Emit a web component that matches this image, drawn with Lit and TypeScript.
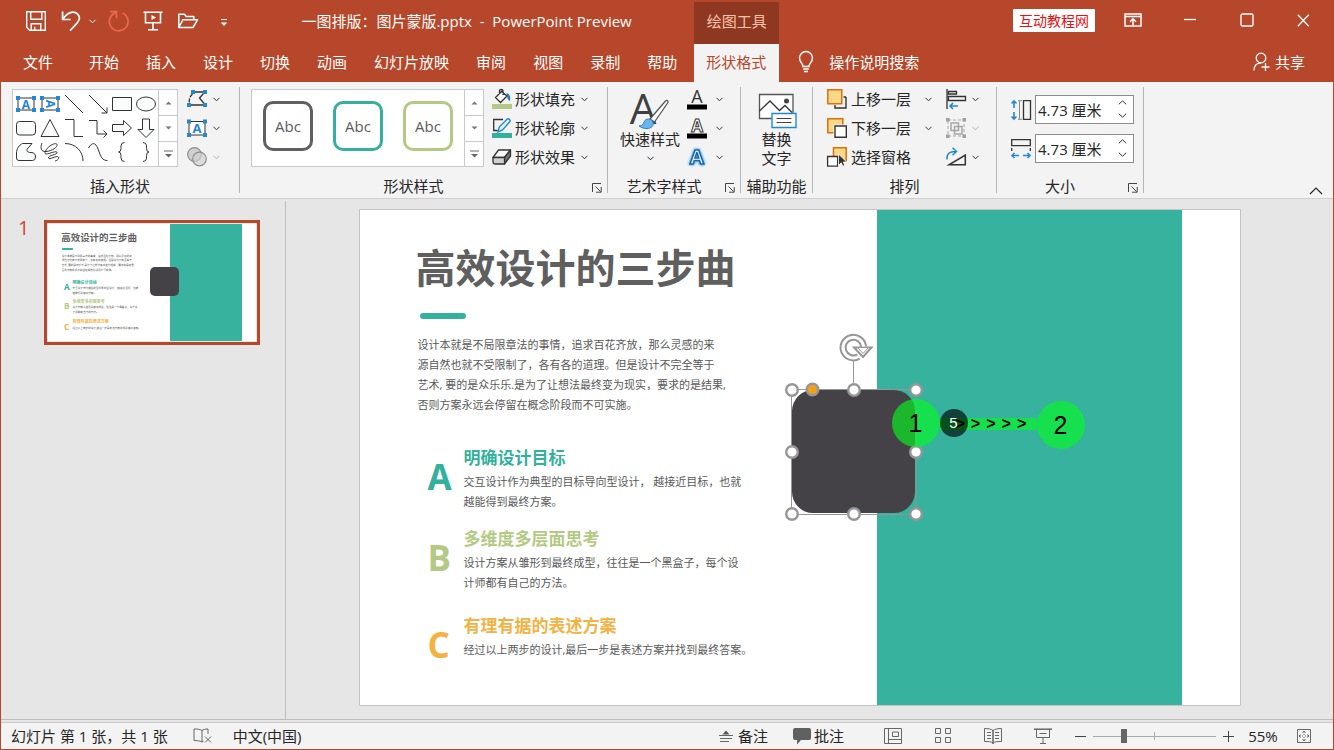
import { LitElement, html, css, svg } from "lit";
import { customElement, property } from "lit/decorators.js";

const icon = (w: number, h: number, body: unknown) =>
  html`<svg width=${w} height=${h} viewBox="0 0 ${w} ${h}" fill="none" stroke="currentColor" aria-hidden="true">${body}</svg>`;

const chevron = () => icon(7, 5, svg`<path d="M.5 .8 3.5 3.8 6.5 .8"/>`);

const corners = (x1: number, y1: number, x2: number, y2: number) => svg`
  <g fill="#2188d4" stroke="none">
    <rect x=${x1 - 2} y=${y1 - 2} width="4" height="4"/><rect x=${x2 - 2} y=${y1 - 2} width="4" height="4"/>
    <rect x=${x1 - 2} y=${y2 - 2} width="4" height="4"/><rect x=${x2 - 2} y=${y2 - 2} width="4" height="4"/>
  </g>`;

const letterA = (x: number, y: number, size: number, fill: string, weight = 700) => svg`
  <text x=${x} y=${y} font-size=${size} font-weight=${weight} font-family="Open Sans, sans-serif" text-anchor="middle" fill=${fill} stroke="none">A</text>`;

const glyphs = {
  save: icon(22, 22, svg`<g stroke-width="1.4"><path d="M1.7 1.7h18.6v18.6H4.7l-3-3z"/><path d="M5.7 1.7v7.6h11.1V1.7M6.2 20.3v-6.6h9.6v6.6M9.7 20.3v-3.6"/></g>`),
  undo: icon(20, 22, svg`<path stroke-width="1.7" d="M1.6 1.5v8h8M1.8 9.2C5.5 4 9 2.2 12 2.2c4 0 6.400 3 6.400 6 0 3.300-2.600 5-9.400 12.600"/>`),
  redo: icon(22, 22, svg`<path stroke-width="1.7" d="M3 1.700h6.500v6.500M9 2.600A9.300 9.300 0 1 0 15.500 3"/>`),
  present: icon(20, 22, svg`<g stroke-width="1.6"><path d="M.5 2.200h19M2.500 2.200v10.600h15V2.200M10 12.800v6.700M5 19.800h10"/><path d="M8.500 5 13 7.500 8.500 10z" fill="currentColor" stroke="none"/></g>`),
  open: icon(22, 20, svg`<path stroke-width="1.5" stroke-linejoin="round" d="M1.800 16.500V3.200h5.700l1.700 2.300h7.600v3.300M1.800 16.500l4-7.700h14.700l-4.500 7.700z"/>`),
  customize: icon(8, 9, svg`<path d="M1 1.500h6"/><path d="M.8 4.500h6.400L4 8z" fill="currentColor" stroke="none"/>`),
  bulb: icon(16, 22, svg`<path stroke-width="1.400" d="M5 15.500c0-3-3.500-4.500-3.500-8.500a6.500 6.500 0 0 1 13 0c0 4-3.500 5.500-3.500 8.500zM5.200 18h5.600M6 20.500h4"/>`),
  share: icon(18, 20, svg`<g stroke-width="1.300"><circle cx="8" cy="6" r="4.800"/><path d="M1 18.500c0-4.500 2.500-7.500 7-7.700M12.500 11v8M8.500 15h8"/></g>`),
  ribbonOptions: icon(18, 14, svg`<g stroke-width="1.500"><path d="M1 1h16v12H1zM1 3.500h16"/><path d="M9 12V6M6 8.700l3-3 3 3"/></g>`),
  minimize: icon(12, 12, svg`<path stroke-width="1.300" d="M0 5.500h12"/>`),
  maximize: icon(14, 14, svg`<rect x="1" y="1" width="12" height="12" rx="1.500" stroke-width="1.400"/>`),
  close: icon(13, 13, svg`<path stroke-width="1.300" d="M.8 .8l11 11.500M11.800 .8l-11 11.500"/>`),
  up: icon(7, 4, svg`<path d="M.5 3.500 3.500 .5l3 3z" fill="#777" stroke="none"/>`),
  down: icon(7, 4, svg`<path d="M.5 .5l3 3 3-3z" fill="#777" stroke="none"/>`),
  more: icon(9, 8, svg`<path d="M0 1h9" stroke="#666"/><path d="M1 4l3.500 3.500L8 4z" fill="#666" stroke="none"/>`),
  launcher: icon(10, 10, svg`<path d="M9 .5H.5V9M3.500 3.500l5 5M9.200 4v5.200H4"/>`),
  collapse: icon(14, 8, svg`<path stroke-width="1.200" d="M1 7l6-6 6 6"/>`),
  spinUp: icon(9, 5, svg`<path d="M.8 4.300 4.500 .800l3.700 3.500"/>`),
  spinDown: icon(9, 5, svg`<path d="M.8 .700l3.700 3.500L8.200 .700"/>`),

  editShape: icon(20, 20, svg`<path stroke-width="1.300" d="M8 3h8M16.500 4.500 12.500 9l5 6M4 16h12"/><path stroke-width="1.300" d="M5.500 5C2.500 8 2.200 10 2.200 14" stroke-dasharray="4 1.500"/><g fill="#2188d4" stroke="none"><rect x="4" y="1" width="4" height="4"/><rect x="16" y="1" width="4" height="4"/><rect x="0" y="14" width="4" height="4"/><rect x="16" y="14" width="4" height="4"/></g>`),
  textBox: icon(20, 20, svg`<rect x="2" y="3.500" width="16" height="13.500" fill="#fff"/>${corners(2, 3.5, 18, 17)}${letterA(10, 15, 13, "#2188d4")}`),
  merge: icon(20, 20, svg`<g fill="#d0d0d0" stroke="#8d8d8d" stroke-width="1.200"><circle cx="7.500" cy="7.500" r="6.800"/><circle cx="12.500" cy="12" r="6.800" fill-opacity=".7"/></g>`),
  fill: icon(20, 20, svg`<path stroke-width="1.300" fill="#fff" d="M9.500 2.500 3.500 8.500l5 5 6.500-6.500zM7.500 5V2c0-2 3.500-2 3.500 0v4"/><path d="M14.500 4c3.500 1 4 4 3.500 8-2.500-1-3-4-3.500-8z" fill="#1d79c5" stroke="none"/><path d="M0 15h20v5H0z" fill="#b4ca84" stroke="none"/>`),
  outline: icon(20, 20, svg`<path stroke-width="1.300" d="M11 1.500H1.700v11h4"/><path d="M6 14l1.300-5L15 1.300c1.500-1.400 4 .8 2.700 2.500L10.500 12z" fill="#e8f4fd" stroke="#2188d4" stroke-width="1.400"/><path d="M0 15h20v5H0z" fill="#34b19d" stroke="none"/>`),
  effects: icon(20, 18, svg`<g stroke-width="1.300" stroke-linejoin="round"><path d="M1 9.500 6.500 2H18.500l-6 7.500z" fill="#fff"/><path d="M12.500 9.500 18.500 2v6L12.500 16z" fill="#777"/><path d="M1 9.500h11.500V16H3.500q-2.500 0-2.500-2z" fill="#d0d0d0"/></g>`),
  quick: icon(40, 38, svg`${letterA(13, 32, 42, "#3f3f3f", 400)}<path d="M20 27 35.500 9c1.500-1.400 3.200 0 2.300 1.800L24.500 30z" fill="#fff" stroke="#505050" stroke-width="1.200"/><path d="M9 34c3 0 4-1 5-4 1.500-4 7.500-4 9 0 1.200 4-2 6.500-6 6.500-3 0-5-.5-8-2.500z" fill="#6cb5ec" stroke="#2783cd"/>`),
  textFill: icon(20, 21, svg`${letterA(10, 14, 18, "#333", 400)}<path d="M0 15.500h20v5H0z" fill="#000" stroke="none"/>`),
  textOutline: icon(20, 21, svg`<text x="10" y="14" font-size="17" font-weight="700" font-family="Open Sans, sans-serif" text-anchor="middle" fill="#fff" stroke="#333">A</text><path d="M0 15.500h20v5H0z" fill="#000" stroke="none"/>`),
  textEffects: icon(20, 20, svg`<text x="10" y="17" font-size="20" font-weight="700" font-family="Open Sans, sans-serif" text-anchor="middle" fill="#fff" stroke="#1466b0" stroke-width="1.600" style="filter: drop-shadow(0 0 1px #6cb5ec) drop-shadow(0 0 1px #6cb5ec)">A</text>`),
  altText: icon(40, 38, svg`<path d="M2.500 2.500H36v24H2.500z" fill="#fff" stroke="#555" stroke-width="1.300"/><path stroke="#333" stroke-width="1.300" d="M2.500 19 13 9l9.500 9.500L28 13.500l7 7"/><circle cx="29.500" cy="9" r="2.500" fill="#444" stroke="none"/><path d="M15 21.500h24v14H15z" fill="#fff" stroke="#2188d4" stroke-width="1.400"/><path stroke="#444" d="M19.500 26.500h15M19.500 30.500h15"/>`),
  forward: icon(20, 20, svg`<path d="M19 8v11H8v-3M19 8h-2.500" stroke-width="1.400"/><path d="M.8 .8h14v14H.8z" fill="#f8d98a" stroke="#dd6f0c" stroke-width="1.500"/>`),
  backward: icon(20, 20, svg`<path d="M.8 .8h15v14H.8z" fill="#f8d98a" stroke="#dd6f0c" stroke-width="1.500"/><path d="M6.500 6.500H20V20H6.500z" fill="#f3f3f3" stroke="none"/><path d="M8 8h11.300v11.300H8z" fill="#fff" stroke-width="1.400"/>`),
  pane: icon(20, 20, svg`<path d="M6.500 .8h12.700v13H6.500z" fill="#f8d98a" stroke="#dd6f0c" stroke-width="1.500"/><path d="M.6 9.500h10v9.700H.6z" fill="#fff" stroke-width="1.300"/><path d="M11.500 7v11.500l2.700-2.700 1.600 3.400 2-1-1.600-3.200h3.500z" fill="#333" stroke="#fff" stroke-width=".8"/>`),
  align: icon(20, 20, svg`<path stroke-width="1.300" d="M1 0v20M2.500 2.500h8V5h-8zM2.500 7.500h17v4h-17z"/><path stroke="#2188d4" stroke-width="1.600" d="M12 17H4M7 14l-3 3 3 3"/>`),
  group: icon(20, 20, svg`<g stroke="#a6a6a6"><path d="M2 2h16v16H2z" stroke-dasharray="3 2"/><path d="M5 5h7.500v7.500H5zM8.500 8.500H16V16H8.500z" stroke-width="1.500"/></g><g fill="#a0a0a0" stroke="none"><rect width="3.500" height="3.500"/><rect x="16.500" width="3.500" height="3.500"/><rect y="16.500" width="3.500" height="3.500"/><rect x="16.500" y="16.500" width="3.500" height="3.500"/></g>`),
  rotate: icon(20, 20, svg`<path stroke-width="1.500" d="M19.300 8v9.800H3z"/><path stroke="#2188d4" stroke-width="1.500" d="M1 12.500C.5 7 3 4.500 10 4.500M6.500 .800l4 3.700-4 3.700"/>`),
  height: icon(20, 20, svg`<path d="M12.500 .700h7v18.600h-7z" stroke-width="1.300"/><path d="M7 .700h4M7 19.300h4M8.500 1v18" stroke-width="1" stroke="#888"/><path stroke="#2188d4" stroke-width="1.600" d="M3 1v7M.500 3.500 3 1l2.500 2.500M3 19v-7M.500 16.500 3 19l2.500-2.500"/>`),
  width: icon(20, 20, svg`<path d="M.7 .700h18.600v6H.7z" stroke-width="1.300"/><path d="M.7 9v3M19.300 9v3" stroke-width="1.300"/><path stroke="#2188d4" stroke-width="1.600" d="M1 16.500h7M3.500 14 1 16.500 3.500 19M19 16.500h-7M16.500 14l2.500 2.500-2.500 2.500"/>`),

  spell: icon(20, 16, svg`<path d="M9 2.500C7 1.200 4 1 1 1v11.500c3 0 6 .3 8 1.500V2.500c1.500-1 3-1.500 6-1.500v5M9 14l1.500-.8M12 8.500l6 6M18 8.500l-6 6"/>`),
  notes: icon(14, 14, svg`<path d="M3.500 5.500 7 1.500l3.500 4z" fill="#555" stroke="none"/><path d="M0 6.500h14M1 9.500h12M1 12.500h9"/>`),
  comment: icon(18, 18, svg`<path d="M2 1h14q2 0 2 2v8q0 2-2 2H8l-4 4.500V13H2q-2 0-2-2V3q0-2 2-2z" fill="#606060" stroke="none"/>`),
  normal: icon(18, 16, svg`<path d="M.5 .5h17v15H.5zM4.500 .5v15M4.500 11.500h13M8.500 4h6v4.500h-6z"/>`),
  sorter: icon(18, 16, svg`<path d="M1.500 .5h5v5h-5zM11.500 .5h5v5h-5zM1.500 9.500h5v5h-5zM11.500 9.500h5v5h-5z"/>`),
  reading: icon(18, 16, svg`<path d="M9 2.500C7 1 4 .5 .5 .5v13c3.500 0 6.500 0 8.500 1.500 2-1.500 5-1.500 8.500-1.500V.5C14 .5 11 1 9 2.500"/><path stroke-width="1.500" d="M9 2v14"/><path d="M3 4.500h4M3 7.500h4M3 10.500h4M11 4.500h4M11 7.500h4M11 10.500h4"/>`),
  show: icon(18, 16, svg`<path stroke-width="1.500" d="M0 1.200h18"/><path d="M2.500 1.500v8h13v-8M5.500 5.500h7M9 9.500V15M6 15.500h6"/>`),
  fit: icon(14, 14, svg`<path d="M.5 .5h13v13H.5z"/><path stroke-dasharray="2 1" d="M7 2v4M7 12V8M2 7h4M12 7H8"/><path d="M5.500 3.500 7 2l1.500 1.500M5.500 10.500 7 12l1.500-1.500M3.500 5.500 2 7l1.500 1.500M10.500 5.500 12 7l-1.500 1.500"/>`),
};

const shapes: [string, unknown][] = [
  ["文本框", svg`<path d="M4 6h16v12H4z" fill="#fff"/>${corners(4, 6, 20, 18)}${letterA(12, 16.5, 12, "#2188d4")}`],
  ["竖排文本框", svg`<path d="M4 6h16v12H4z" fill="#fff"/>${corners(4, 6, 20, 18)}<g transform="rotate(90 12 12)">${letterA(12, 16.5, 12, "#2188d4")}</g>`],
  ["直线", svg`<path d="M3 3l18 18"/>`],
  ["箭头", svg`<path d="M3 3l18 18M21 15.500V21h-5.500"/>`],
  ["矩形", svg`<path d="M2.500 5.500h19v13h-19z" fill="#fafcfb"/>`],
  ["椭圆", svg`<ellipse cx="12" cy="12" rx="9.500" ry="7" fill="#fafcfb"/>`],
  ["圆角矩形", svg`<rect x="2.500" y="5.500" width="19" height="13.500" rx="3" fill="#fafcfb"/>`],
  ["三角形", svg`<path d="M12 3.500 21 20.500H3z" fill="#fafcfb"/>`],
  ["肘形连接符", svg`<path d="M3 3.500h9v17h9"/>`],
  ["肘形箭头", svg`<path d="M3 4.500h8v13.500h10M17.500 14.500 21 18l-3.500 3.500"/>`],
  ["右箭头", svg`<path d="M2.500 8.500h11v-4L21.500 12l-8 7.500v-4h-11z" fill="#fafcfb"/>`],
  ["下箭头", svg`<path d="M8.500 3h7v10.500h4.500L12 21.500 4 13.500h4.500z" fill="#fafcfb"/>`],
  ["任意多边形", svg`<path d="M5 20.500h13.500q3 0 3-3.500 0-4.500-4.500-4.500c-5 0-5-3-2-5.500l3-3.500H8.500C5 5 2.500 9 2.500 13v5q0 2.500 2.500 2.500z" fill="#fafcfb"/>`],
  ["自由曲线", svg`<path d="M4 3C2 8 3 12 8 11.500c6-.5 12-4.500 11-7C18 1.500 8 7 7 12.500c-.5 4.500 11-3 12 0 .5 2.500-9 2.500-8.500 5.500.5 2.500 8-3 10-1 1 1.500-1 3.500-3.500 4"/>`],
  ["弧形", svg`<path d="M3 3.500c11 0 18 8 18 17.500"/>`],
  ["曲线", svg`<path d="M2.500 8C6 2 9.500 2 12 9c3 8 4 11.500 9.500 11.500"/>`],
  ["左大括号", svg`<path d="M14.500 2.500q-3.500 0-3.500 3.500v2.500Q11 12 8.500 12q2.500 0 2.500 3.500V18q0 3.500 3.500 3.500"/>`],
  ["右大括号", svg`<path d="M9 2.500q3.500 0 3.500 3.500v2.500q0 3.500 2.500 3.500-2.500 0-2.500 3.500V18q0 3.500-3.500 3.500"/>`],
];

const points = [
  { letter: "A", tone: "teal", title: "明确设计目标", lines: ["交互设计作为典型的目标导向型设计， 越接近目标，也就", "越能得到最终方案。"] },
  { letter: "B", tone: "green", title: "多维度多层面思考", lines: ["设计方案从雏形到最终成型，往往是一个黑盒子，每个设", "计师都有自己的方法。"] },
  { letter: "C", tone: "amber", title: "有理有据的表述方案", lines: ["经过以上两步的设计,最后一步是表述方案并找到最终答案。"] },
];

const intro = [
  "设计本就是不局限章法的事情，追求百花齐放，那么灵感的来",
  "源自然也就不受限制了，各有各的道理。但是设计不完全等于",
  "艺术, 要的是众乐乐.是为了让想法最终变为现实，要求的是结果,",
  "否则方案永远会停留在概念阶段而不可实施。",
];

@customElement("slide-page")
class SlidePage extends LitElement {
  @property({ type: Boolean }) selected = false;

  static styles = css`
    :host { display: block; position: relative; width: 880px; height: 495px; background: #fff; color: #595959; font-family: "Open Sans", "Noto Sans CJK SC", sans-serif; }
    .layout { display: grid; grid-template-columns: 517fr 305fr 58fr; height: 100%; }
    .copy { padding: 33px 0 0 56px; white-space: nowrap; }
    .band { background: #36b29e; }
    h1 { margin: 0; font-size: 40px; line-height: 50px; color: #5f5f5f; }
    .rule { width: 46px; height: 6px; margin: 20px 4px 0; border-radius: 3px; background: #34b19d; }
    p { margin: 0; font-size: 11px; line-height: 20px; }
    .intro { margin: 16px 0 0 2px; }
    .points { display: grid; grid-template-rows: 81px 87px auto; margin: 30px 0 0 10px; }
    .point { display: grid; grid-template-columns: 38px auto; align-items: start; }
    .letter { font-size: 35px; line-height: 36px; font-weight: 700; padding-top: 14px; margin-left: 2px; }
    h2 { margin: 0 0 1px; font-size: 17px; line-height: 26px; }
    .teal { color: #34b19d; }
    .green { color: #b4ca84; }
    .amber { color: #f4b243; }
    .shape { position: absolute; left: 432px; top: 180px; width: 123px; height: 123px; border-radius: 21px; background: #444246; }
    .frame { position: absolute; left: 420px; top: 116px; }
    .dot { position: absolute; display: grid; place-items: center; border-radius: 50%; font-family: "Liberation Sans", sans-serif; }
    .step { width: 48px; height: 48px; background: rgba(4, 250, 32, .64); color: #000; font-size: 25px; line-height: 28px; }
    .first { left: 532px; top: 189px; }
    .second { left: 677px; top: 191px; }
    .trail { position: absolute; left: 580px; top: 208px; width: 97px; height: 12px; padding-left: 16px; box-sizing: border-box; display: flex; gap: 6px; align-items: center; background: rgba(4, 250, 32, .64); color: #000; font: 700 16px/12px "Liberation Sans", sans-serif; }
    .timer { left: 580px; top: 199px; width: 28px; height: 28px; background: rgba(0, 0, 0, .64); color: #fff; font-size: 15px; line-height: 18px; }
  `;

  private handle = (x: number, y: number) =>
    svg`<circle cx=${x} cy=${y} r="5.800" fill="#fff" stroke="#969696" stroke-width="2.400"/>`;

  private overlay() {
    return html`
      <svg class="frame" width="150" height="200" viewBox="0 0 150 200" fill="none" stroke="#969696" aria-hidden="true">
        <path d="M11.500 63.500h124.500v125H11.500zM73.500 63.500V34"/>
        <path d="M74 21.500 91.500 21.500 83 31z" fill="#fff" stroke-width="2"/>
        <path d="M83.600 20.500A10.300 10.300 0 1 0 78.500 30.500" stroke-width="7"/>
        <path d="M83.600 20.500A10.300 10.300 0 1 0 78.500 30.500" stroke="#fff" stroke-width="3"/>
        <path d="M77 22h12l-6 6z" fill="#fff" stroke="none"/>
        <path d="M73.500 21.500h4l5.500 6 5.500-6h3"/>
        ${[12, 74, 136].map((x) => [64, 126, 188].map((y) => (x === 74 && y === 126 ? "" : this.handle(x, y))))}
        <circle cx="32.500" cy="63.500" r="5.800" fill="#f0a01e" stroke-width="2.400"/>
      </svg>
      <span class="dot step first">1</span>
      <span class="trail">${[0, 1, 2, 3, 4].map(() => html`<span>&gt;</span>`)}</span>
      <span class="dot step second">2</span>
      <span class="dot timer">5</span>`;
  }

  render() {
    return html`
      <div class="layout">
        <div class="copy">
          <h1>高效设计的三步曲</h1>
          <div class="rule"></div>
          <div class="intro">${intro.map((l) => html`<p>${l}</p>`)}</div>
          <div class="points">
            ${points.map((p) => html`
              <div class="point">
                <span class="letter ${p.tone}">${p.letter}</span>
                <div><h2 class=${p.tone}>${p.title}</h2>${p.lines.map((l) => html`<p>${l}</p>`)}</div>
              </div>`)}
          </div>
        </div>
        <div class="band"></div>
      </div>
      <div class="shape"></div>
      ${this.selected ? this.overlay() : ""}`;
  }
}

@customElement("app-root")
class AppRoot extends LitElement {
  static styles = css`
    :host { display: flex; flex-direction: column; height: 100vh; box-sizing: border-box; border: solid #b7472a; border-width: 0 1px 1px; background: #e6e6e6; color: #262626; font: 15px/20px "Open Sans", "Noto Sans CJK SC", sans-serif; white-space: nowrap; overflow: hidden; }
    * { box-sizing: border-box; }
    svg { display: block; flex: none; overflow: visible; }
    button { display: flex; align-items: center; justify-content: center; margin: 0; padding: 0; border: 0; background: none; color: inherit; font: inherit; white-space: nowrap; }
    a { color: inherit; text-decoration: none; }

    header { display: grid; grid-template-columns: auto auto 1fr; grid-template-rows: 44px 38px; background: #b7472a; color: #fff; }
    .quick { display: flex; align-items: center; padding-bottom: 2px; }
    .qat { display: flex; align-items: center; padding-left: 24px; }
    .qat .undo { margin-left: 14px; }
    .qat .arrow { margin-left: 8px; }
    .qat .redo { margin-left: 11px; color: #e8694b; }
    .qat .present { margin-left: 14px; }
    .qat .open { margin-left: 14px; }
    .qat .custom { margin: 3px 11px 0 21px; }
    .title { flex: 1; text-align: center; white-space: pre; }
    .context { display: grid; place-items: center; margin-top: 2px; padding-bottom: 4px; background: #8f3821; color: #fbc3ae; }
    .window { display: flex; align-items: center; justify-content: flex-end; padding: 0 1px 4px 0; }
    .window button { width: 57px; height: 40px; }
    .badge { margin-right: 9px; padding: 0 6px; border-radius: 1px; background: #fff; color: #e81010; font-size: 14px; line-height: 23px; }
    .tabs { display: flex; align-items: center; gap: 27px; padding: 0 17px 2px 22px; }
    .tabs .file { margin-right: 9px; }
    .active { display: grid; place-items: center; padding: 0 13px 2px 12px; background: #f3f3f3; color: #b7472a; }
    .tools { display: flex; align-items: center; justify-content: space-between; padding: 0 28px 2px 19px; }
    .tell { gap: 15px; }
    .share { gap: 4px; }

    .ribbon { display: flex; padding: 5px 0; background: #f3f3f3; border-bottom: 1px solid #cfcfcf; }
    .group { display: grid; grid-template-rows: 93px 13px; border-right: 1px solid #b5b5b5; }
    .body { display: flex; }
    .label { display: flex; align-items: center; line-height: 13px; }
    .label span { flex: 1; text-align: center; }
    .label button { width: 20px; height: 13px; color: #444; padding-top: 3px; }
    .insert .body { padding: 0 19px 0 11px; gap: 9px; }
    .styles .body { padding: 0 19px 0 11px; gap: 8px; }
    .wordart .body { padding: 0 17px 0 12px; gap: 7px; }
    .access .body { justify-content: center; padding: 0 5px; }
    .arrange .body { padding: 0 17px 0 14px; gap: 14px; }
    .size .body { padding: 0 9px 0 14px; }
    .access .label { width: 71px; }
    .gallery { display: flex; align-self: start; height: 78px; margin-top: 2px; border: 1px solid #c9c9c9; background: #fff; }
    .shapes { display: grid; grid-template: repeat(3, 24px) / repeat(6, 24px); padding: 2px 0 0 1px; color: #333; }
    .cards { display: flex; align-items: center; gap: 20px; padding: 0 11px 5px; }
    .card { width: 50px; height: 50px; border: 3px solid; border-radius: 10px; }
    .card span { color: #5c5c5c; font-size: 15px; }
    .card.dark { border-color: #606060; }
    .card.teal { border-color: #34b19d; }
    .card.green { border-color: #b4ca84; }
    .scroll { display: grid; grid-template-rows: 1fr 1fr 1fr; width: 19px; border-left: 1px solid #c9c9c9; }
    .scroll button + button { border-top: 1px solid #c9c9c9; }
    .stack { display: flex; flex-direction: column; gap: 5px; color: #333; }
    .stack button { height: 24px; gap: 6px; justify-content: flex-start; }
    .stack .caption { color: #262626; margin-left: -3px; }
    .stack.wide button { gap: 9px; }
    .stack button.off { color: #b0b0b0; }
    .stack.spread .arrow { margin-left: auto; }
    .stack.spread { width: 105px; }
    .arrange .caption { margin-left: -2px; }
    .big { flex-direction: column; align-self: start; padding-top: 5px; line-height: 19px; }
    .big .arrow { margin-top: 7px; }
    .fields { display: grid; gap: 10px; padding-top: 8px; align-content: start; }
    .field { display: flex; align-items: center; gap: 4px; color: #333; }
    .spin { display: flex; width: 99px; height: 29px; border: 1px solid #8c8c8c; background: #fff; }
    .spin input { flex: 1; min-width: 0; padding: 0 0 0 2px; border: 0; background: none; color: #262626; font: inherit; outline: 0; }
    .spin .steps { display: grid; width: 21px; padding-bottom: 1px; }
    .collapse { margin: auto 10px -2px auto; }

    main { flex: 1; min-height: 0; display: grid; grid-template-columns: 285px 1fr; border-bottom: 1px solid #bdbdbd; }
    aside { display: flex; align-items: start; gap: 15px; margin-top: 2px; padding: 19px 0 0 17px; border-right: 1px solid #bdbdbd; }
    .number { width: 11px; color: #d0492c; font-size: 20px; line-height: 16px; }
    .thumb { border: 3px solid #b7472a; padding: 1px; background: #e6e6e6; }
    .thumb slide-page { zoom: .2365; }
    .stage { display: flex; justify-content: center; align-items: start; padding: 10px 20px 0 0; overflow: hidden; }
    .sheet { border: 1px solid #c4c4c4; }

    footer { display: flex; align-items: center; height: 27px; border-top: 1px solid #c9c9c9; margin-top: 2px; padding: 0 22px 0 10px; background: #f3f3f3; color: #666; }
    footer .text { color: #262626; }
    .lang { margin: 0 auto 0 20px; }
    .spell { margin-left: 25px; }
    .notes { gap: 5px; }
    .comments { margin: 0 40px 0 25px; gap: 3px; }
    .views { display: flex; gap: 32px; margin-right: 23px; }
    .zoom { display: flex; align-items: center; gap: 7px; }
    .range { appearance: none; width: 123px; height: 16px; margin: 0; background: linear-gradient(#aaa, #aaa) 50% 50% / 1px 8px no-repeat, linear-gradient(#aaa, #aaa) 50% 50% / 100% 1px no-repeat; }
    .range::-webkit-slider-thumb { appearance: none; width: 6px; height: 14px; background: #666; border: 0; }
    .percent { margin: 0 18px 0 13px; width: 32px; }
  `;

  private tool(name: string, glyph: unknown, caption = "", off = false, arrow = true) {
    return html`<button class=${off ? "off" : ""} aria-label=${name}>${glyph}${caption ? html`<span class="caption">${caption}</span>` : ""}${arrow ? html`<span class="arrow">${chevron()}</span>` : ""}</button>`;
  }

  private scroller() {
    return html`<div class="scroll">
      <button aria-label="上一行">${glyphs.up}</button><button aria-label="下一行">${glyphs.down}</button><button aria-label="其他">${glyphs.more}</button>
    </div>`;
  }

  private launcher(name: string) {
    return html`<button aria-label=${name}>${glyphs.launcher}</button>`;
  }

  private spin(id: string, name: string, glyph: unknown) {
    return html`<div class="field">
      <label for=${id} aria-label=${name}>${glyph}</label>
      <div class="spin">
        <input id=${id} type="text" aria-label=${name} .value=${"4.73 厘米"}>
        <div class="steps"><button aria-label="增加">${glyphs.spinUp}</button><button aria-label="减少">${glyphs.spinDown}</button></div>
      </div>
    </div>`;
  }

  render() {
    return html`
      <header>
        <div class="quick">
          <div class="qat">
            <button aria-label="保存">${glyphs.save}</button>
            <button class="undo" aria-label="撤消">${glyphs.undo}</button>
            <button class="arrow" aria-label="撤消列表">${chevron()}</button>
            <button class="redo" aria-label="重复">${glyphs.redo}</button>
            <button class="present" aria-label="从头开始放映">${glyphs.present}</button>
            <button class="open" aria-label="打开">${glyphs.open}</button>
            <button class="custom" aria-label="自定义快速访问工具栏">${glyphs.customize}</button>
          </div>
          <div class="title">一图排版：图片蒙版.pptx  -  PowerPoint Preview</div>
        </div>
        <div class="context">绘图工具</div>
        <div class="window">
          <span class="badge">互动教程网</span>
          <button aria-label="功能区显示选项">${glyphs.ribbonOptions}</button>
          <button aria-label="最小化">${glyphs.minimize}</button>
          <button aria-label="最大化">${glyphs.maximize}</button>
          <button aria-label="关闭">${glyphs.close}</button>
        </div>
        <nav class="tabs">
          <a class="file" href="#file">文件</a>
          ${["开始", "插入", "设计", "切换", "动画", "幻灯片放映", "审阅", "视图", "录制", "帮助"].map((t) => html`<a href="#${t}">${t}</a>`)}
        </nav>
        <a class="active" href="#format">形状格式</a>
        <div class="tools">
          <button class="tell">${glyphs.bulb}<span>操作说明搜索</span></button>
          <button class="share">${glyphs.share}<span>共享</span></button>
        </div>
      </header>

      <section class="ribbon">
        <div class="group insert">
          <div class="body">
            <div class="gallery">
              <div class="shapes">${shapes.map(([n, g]) => html`<button aria-label=${n}>${icon(24, 24, g)}</button>`)}</div>
              ${this.scroller()}
            </div>
            <div class="stack">
              ${this.tool("编辑形状", glyphs.editShape)}
              ${this.tool("文本框", glyphs.textBox)}
              ${this.tool("合并形状", glyphs.merge, "", true)}
            </div>
          </div>
          <div class="label"><span>插入形状</span></div>
        </div>

        <div class="group styles">
          <div class="body">
            <div class="gallery">
              <div class="cards">${["dark", "teal", "green"].map((c) => html`<button class="card ${c}"><span>Abc</span></button>`)}</div>
              ${this.scroller()}
            </div>
            <div class="stack">
              ${this.tool("形状填充", glyphs.fill, "形状填充")}
              ${this.tool("形状轮廓", glyphs.outline, "形状轮廓")}
              ${this.tool("形状效果", glyphs.effects, "形状效果")}
            </div>
          </div>
          <div class="label"><span>形状样式</span>${this.launcher("设置形状格式")}</div>
        </div>

        <div class="group wordart">
          <div class="body">
            <button class="big">${glyphs.quick}<span>快速样式</span><span class="arrow">${chevron()}</span></button>
            <div class="stack wide">
              ${this.tool("文本填充", glyphs.textFill)}
              ${this.tool("文本轮廓", glyphs.textOutline)}
              ${this.tool("文本效果", glyphs.textEffects)}
            </div>
          </div>
          <div class="label"><span>艺术字样式</span>${this.launcher("设置文本效果格式")}</div>
        </div>

        <div class="group access">
          <div class="body"><button class="big">${glyphs.altText}<span>替换<br>文字</span></button></div>
          <div class="label"><span>辅助功能</span></div>
        </div>

        <div class="group arrange">
          <div class="body">
            <div class="stack spread">
              ${this.tool("上移一层", glyphs.forward, "上移一层")}
              ${this.tool("下移一层", glyphs.backward, "下移一层")}
              ${this.tool("选择窗格", glyphs.pane, "选择窗格", false, false)}
            </div>
            <div class="stack">
              ${this.tool("对齐", glyphs.align)}
              ${this.tool("组合", glyphs.group, "", true)}
              ${this.tool("旋转", glyphs.rotate)}
            </div>
          </div>
          <div class="label"><span>排列</span></div>
        </div>

        <div class="group size">
          <div class="body">
            <div class="fields">
              ${this.spin("shape-height", "高度", glyphs.height)}
              ${this.spin("shape-width", "宽度", glyphs.width)}
            </div>
          </div>
          <div class="label"><span>大小</span>${this.launcher("大小和位置")}</div>
        </div>
        <button class="collapse" aria-label="折叠功能区">${glyphs.collapse}</button>
      </section>

      <main>
        <aside>
          <span class="number">1</span>
          <div class="thumb"><slide-page></slide-page></div>
        </aside>
        <div class="stage"><div class="sheet"><slide-page selected></slide-page></div></div>
      </main>

      <footer>
        <span class="text">幻灯片 第 1 张，共 1 张</span>
        <button class="spell" aria-label="拼写检查">${glyphs.spell}</button>
        <button class="lang text">中文(中国)</button>
        <button class="notes">${glyphs.notes}<span class="text">备注</span></button>
        <button class="comments">${glyphs.comment}<span class="text">批注</span></button>
        <div class="views">
          <button aria-label="普通视图">${glyphs.normal}</button>
          <button aria-label="幻灯片浏览">${glyphs.sorter}</button>
          <button aria-label="阅读视图">${glyphs.reading}</button>
          <button aria-label="幻灯片放映">${glyphs.show}</button>
        </div>
        <div class="zoom">
          <button aria-label="缩小">${icon(11, 11, svg`<path d="M0 5.500h11" stroke="#444"/>`)}</button>
          <input class="range" type="range" min="0" max="100" .value=${"24"} aria-label="显示比例">
          <button aria-label="放大">${icon(11, 11, svg`<path d="M0 5.500h11M5.500 0v11" stroke="#444"/>`)}</button>
        </div>
        <button class="percent text">55%</button>
        <button aria-label="使幻灯片适应当前窗口">${glyphs.fit}</button>
      </footer>`;
  }
}
